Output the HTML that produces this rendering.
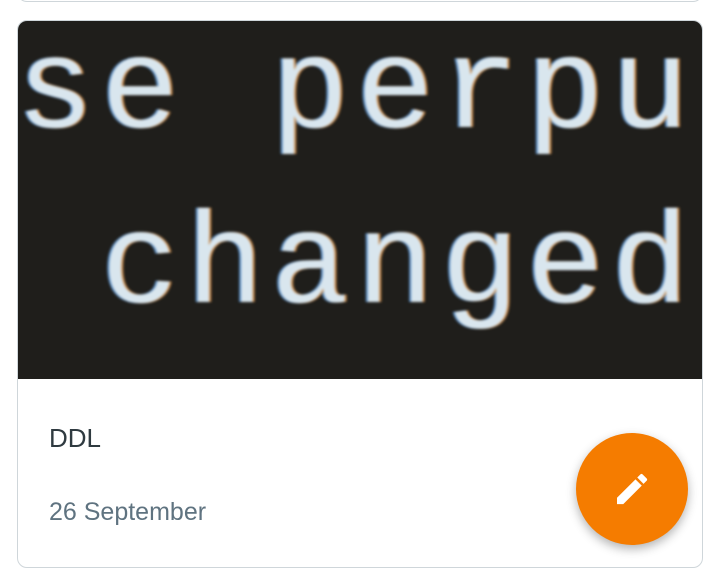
<!DOCTYPE html>
<html><head><style>
body{margin:0;width:720px;height:574px;background:#fff;overflow:hidden;position:relative;font-family:"Liberation Sans",sans-serif}
.prev{position:absolute;left:17px;top:-20px;width:684px;height:20px;border:1px solid #cfd6da;border-radius:10px}
.card{position:absolute;left:17px;top:20px;width:684px;height:546px;border:1px solid #cfd6da;border-radius:10px;overflow:hidden;background:#fff}
.img{position:absolute;left:0;top:0;width:685px;height:358px;background:#1f1e1b;overflow:hidden}
.t{position:absolute;left:-2px;font-family:"Liberation Mono",monospace;font-size:130px;letter-spacing:7px;color:#d9e6ee;white-space:pre;filter:blur(1.3px);text-shadow:2px 0 0 #c98a4a,-2px 0 0 #5c8fc6;line-height:1}
.title{position:absolute;left:31px;top:402px;font-size:26px;color:#2f3a40}
.date{position:absolute;left:31px;top:477px;font-size:25px;color:#5f7380}
.fab{position:absolute;left:576px;top:433px;width:112px;height:112px;border-radius:50%;background:#f57c00;box-shadow:0 4px 10px rgba(0,0,0,.3)}
</style></head><body>
<div class="prev"></div>
<div class="card">
<div class="img">
<div class="t" style="top:8px">se perpu</div>
<div class="t" style="top:183px"> changed</div>
</div>
<div class="title">DDL</div>
<div class="date">26 September</div>
</div>
<div class="fab"><svg width="112" height="112" viewBox="0 0 112 112"><g transform="translate(36,36) scale(1.67)"><path fill="#fff" d="M3 17.25V21h3.75L17.81 9.94l-3.75-3.75L3 17.25zM20.71 7.04a1 1 0 0 0 0-1.41l-2.34-2.34a1 1 0 0 0-1.41 0l-1.83 1.83 3.75 3.75 1.83-1.83z"/></g></svg></div>
</body></html>
